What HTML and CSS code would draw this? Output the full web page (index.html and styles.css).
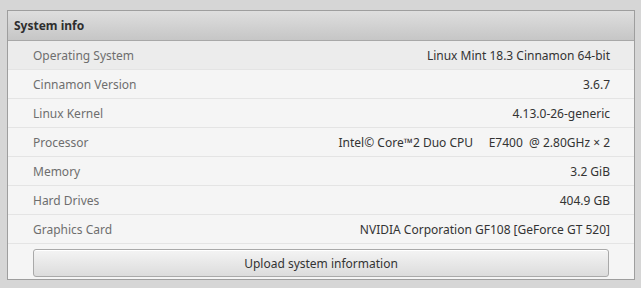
FILE: index.html
```html
<!DOCTYPE html>
<html lang="en">
<head>
    <meta charset="UTF-8">
    <meta name="viewport" content="width=device-width, initial-scale=1.0">
    <title>System info</title>
    <link rel="stylesheet" href="styles.css">
</head>
<body>
    <div class="info-frame">
        <div class="info-header">System info</div>

        <div class="info-row first">
            <span class="info-label">Operating System</span>
            <span class="info-value">Linux Mint 18.3 Cinnamon 64-bit</span>
        </div>
        <div class="info-row">
            <span class="info-label">Cinnamon Version</span>
            <span class="info-value">3.6.7</span>
        </div>
        <div class="info-row">
            <span class="info-label">Linux Kernel</span>
            <span class="info-value">4.13.0-26-generic</span>
        </div>
        <div class="info-row">
            <span class="info-label">Processor</span>
            <span class="info-value">Intel© Core™2 Duo CPU     E7400  @ 2.80GHz × 2</span>
        </div>
        <div class="info-row">
            <span class="info-label">Memory</span>
            <span class="info-value">3.2 GiB</span>
        </div>
        <div class="info-row">
            <span class="info-label">Hard Drives</span>
            <span class="info-value">404.9 GB</span>
        </div>
        <div class="info-row">
            <span class="info-label">Graphics Card</span>
            <span class="info-value">NVIDIA Corporation GF108 [GeForce GT 520]</span>
        </div>

        <div class="upload-area">
            <button class="upload-button">Upload system information</button>
        </div>
    </div>
</body>
</html>
```

FILE: styles.css
```css
* {
    margin: 0;
    padding: 0;
    box-sizing: border-box;
}

body {
    font-family: "Noto Sans", "Open Sans", sans-serif;
    font-size: 12px;
    background: #d6d6d6;
    padding: 10px 6px 0 7px;
    color: #333;
}

.info-frame {
    width: 628px;
    height: 270px;
    border: 1px solid #9e9e9e;
    background: #f5f5f5;
    display: flex;
    flex-direction: column;
}

.info-header {
    height: 30px;
    padding-left: 6px;
    display: flex;
    align-items: center;
    font-weight: bold;
    color: #2e2e2e;
    background: linear-gradient(to bottom, #dedede 0%, #c6c6c6 100%);
    border-bottom: 1px solid #a8a8a8;
}

.info-row {
    height: 29px;
    padding: 0 24px 0 25px;
    display: flex;
    align-items: center;
    justify-content: space-between;
    border-bottom: 1px solid #e4e4e4;
}

.info-row.first {
    background: #ececec;
}

.info-label {
    color: #6e6e6e;
}

.info-value {
    color: #333;
    white-space: pre;
}

.upload-area {
    flex: 1;
    padding: 5px 24px 0 25px;
}

.upload-button {
    width: 576px;
    height: 28px;
    font-family: inherit;
    font-size: 12px;
    color: #333;
    border: 1px solid #a9a9a9;
    border-radius: 3px;
    background: linear-gradient(to bottom, #f4f4f4 0%, #dcdcdc 100%);
    box-shadow: inset 0 1px 0 #ffffff;
    cursor: pointer;
}
```
